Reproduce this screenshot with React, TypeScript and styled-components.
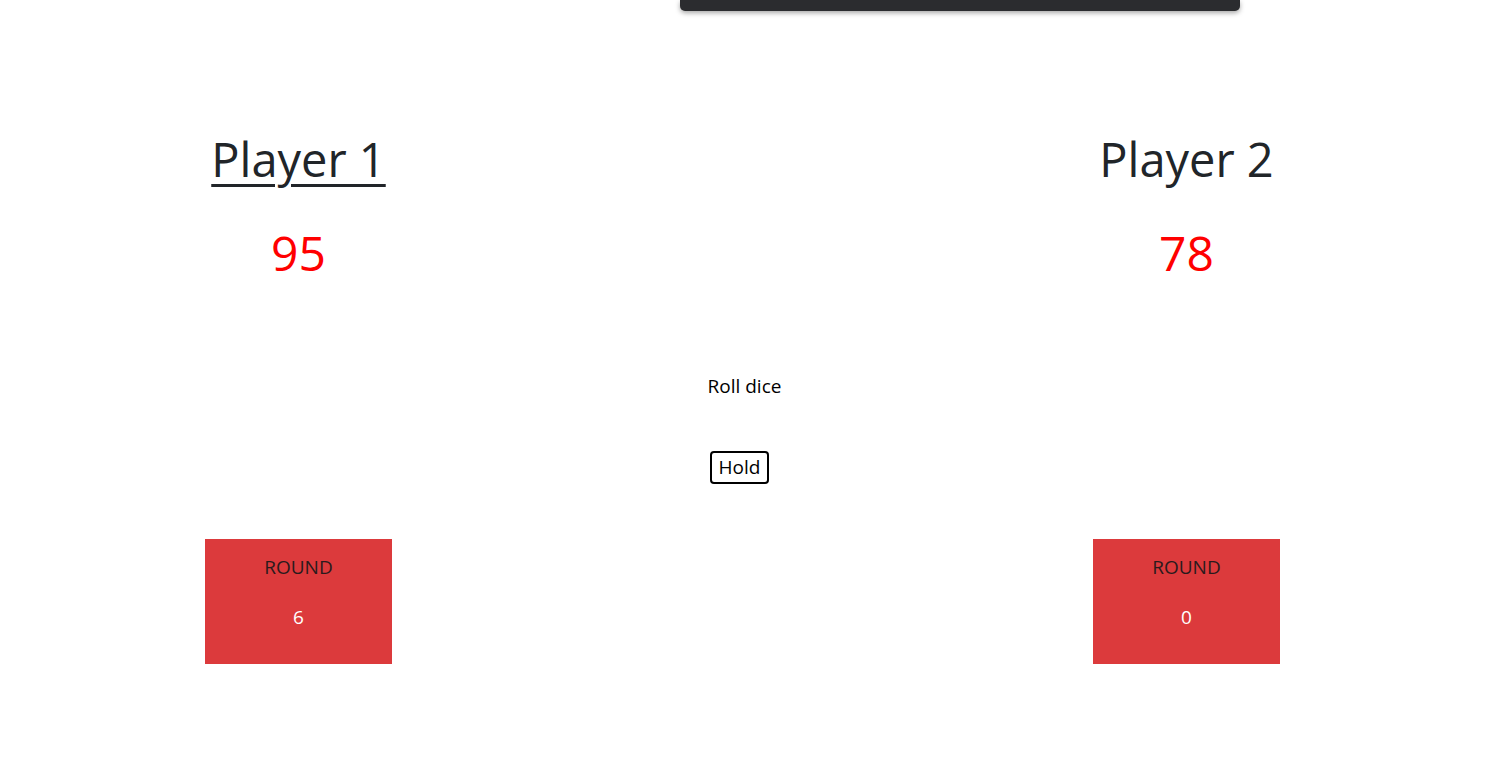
import styled, {createGlobalStyle} from "styled-components";

const GlobalStyle = createGlobalStyle`
    html, body {
        margin: 0;
        padding: 0;
        background: #ffffff;
        font-family: "Open Sans", "Noto Sans", sans-serif;
        color: #212529;
    }
`;

const players = [
    {name: 'Player 1', score: 95, round: 6, active: true},
    {name: 'Player 2', score: 78, round: 0, active: false},
];

const App = () => {
    const [left, right] = players;

    return (
        <>
            <GlobalStyle/>
            <Page>
                <Toast/>
                <Board>
                    <PlayerPanel>
                        <PlayerName $active={ left.active }>{ left.name }</PlayerName>
                        <Score>{ left.score }</Score>
                        <RoundBox>
                            <RoundLabel>ROUND</RoundLabel>
                            <RoundValue>{ left.round }</RoundValue>
                        </RoundBox>
                    </PlayerPanel>
                    <Controls>
                        <RollButton type="button">Roll dice</RollButton>
                        <HoldButton type="button">Hold</HoldButton>
                    </Controls>
                    <PlayerPanel>
                        <PlayerName $active={ right.active }>{ right.name }</PlayerName>
                        <Score>{ right.score }</Score>
                        <RoundBox>
                            <RoundLabel>ROUND</RoundLabel>
                            <RoundValue>{ right.round }</RoundValue>
                        </RoundBox>
                    </PlayerPanel>
                </Board>
            </Page>
        </>
    )
}

const Page = styled.div`
    position: relative;
    width: 100%;
    min-height: 768px;
`;

const Toast = styled.div`
    position: absolute;
    top: 0;
    left: 680px;
    width: 560px;
    height: 11px;
    background: #2b2c2f;
    border-radius: 0 0 5px 5px;
    box-shadow: 0 2px 5px rgba(0, 0, 0, 0.35);
`;

const Board = styled.div`
    display: grid;
    grid-template-columns: 400px 400px 400px;
    column-gap: 44px;
    justify-content: center;
    padding-top: 124px;
`;

const PlayerPanel = styled.div`
    display: flex;
    flex-direction: column;
    align-items: center;
`;

const PlayerName = styled.h1<{ $active: boolean }>`
    margin: 0;
    font-size: 47px;
    font-weight: 400;
    line-height: 70px;
    color: #212529;
    text-decoration: ${ p => p.$active ? 'underline' : 'none' };
    text-decoration-thickness: 3px;
    text-underline-offset: 7px;
`;

const Score = styled.div`
    margin-top: 24px;
    font-size: 48px;
    line-height: 70px;
    color: #ff0000;
`;

const RoundBox = styled.div`
    margin-top: 251px;
    width: 187px;
    height: 125px;
    background: #dc3a3c;
    display: flex;
    flex-direction: column;
    align-items: center;
    padding-top: 14px;
    box-sizing: border-box;
`;

const RoundLabel = styled.div`
    font-size: 19px;
    line-height: 28px;
    color: #2a1a1c;
`;

const RoundValue = styled.div`
    margin-top: 22px;
    font-size: 19px;
    line-height: 28px;
    color: #ffffff;
`;

const Controls = styled.div`
    display: flex;
    flex-direction: column;
    align-items: center;
    padding-top: 250px;
`;

const RollButton = styled.button`
    margin-left: 4px;
    font-family: "Open Sans", "Noto Sans", sans-serif;
    font-size: 19px;
    background: none;
    border: none;
    padding: 0;
    color: #000000;
    line-height: 24px;
    cursor: pointer;
`;

const HoldButton = styled.button`
    margin-top: 53px;
    margin-right: 6px;
    font-family: "Open Sans", "Noto Sans", sans-serif;
    font-size: 19px;
    background: #ffffff;
    border: 2px solid #000000;
    border-radius: 4px;
    padding: 2px 7px;
    color: #000000;
    line-height: 25px;
    cursor: pointer;
`;

export default App;
